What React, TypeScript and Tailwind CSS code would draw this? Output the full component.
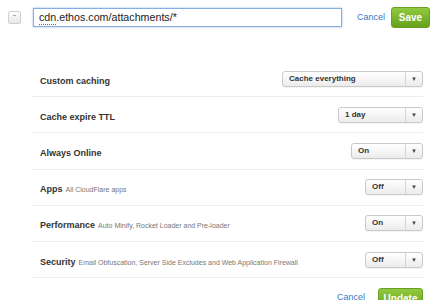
import React from "react";

type Row = {
  title: string;
  desc?: string;
  value: string;
  width: string;
};

const rows: Row[] = [
  { title: "Custom caching", value: "Cache everything", width: "w-[141px]" },
  { title: "Cache expire TTL", value: "1 day", width: "w-[85px]" },
  { title: "Always Online", value: "On", width: "w-[72px]" },
  { title: "Apps", desc: "All CloudFlare apps", value: "Off", width: "w-[58px]" },
  {
    title: "Performance",
    desc: "Auto Minify, Rocket Loader and Pre-loader",
    value: "On",
    width: "w-[58px]",
  },
  {
    title: "Security",
    desc: "Email Obfuscation, Server Side Excludes and Web Application Firewall",
    value: "Off",
    width: "w-[58px]",
  },
];

function Select({ value, width }: { value: string; width: string }) {
  return (
    <div
      className={`${width} h-[16px] flex items-stretch rounded-[3px] border border-[#c9c9c9] bg-gradient-to-b from-white to-[#ececec] shadow-[0_1px_0_rgba(0,0,0,0.04)]`}
    >
      <div className="flex-1 flex items-center pl-[6px] text-[8px] font-bold text-[#333] leading-none">
        {value}
      </div>
      <div className="w-[17px] border-l border-[#d4d4d4] flex items-center justify-center text-[6px] text-[#444] leading-none">
        ▼
      </div>
    </div>
  );
}

export default function App() {
  return (
    <div
      className="w-[435px] h-[300px] bg-white overflow-hidden"
      style={{ fontFamily: '"Liberation Sans", Arial, sans-serif' }}
    >
      {/* Top bar */}
      <div className="flex items-center pl-[8px] pt-[7px]">
        <div className="w-[13px] h-[13px] rounded-[2px] border border-[#cfcfcf] bg-gradient-to-b from-white to-[#e6e6e6] flex justify-center pt-[3px]">
          <div className="w-[3px] h-[1px] bg-[#aaa]" />
        </div>
        <div className="ml-[12px] w-[309px] h-[19px] border border-[#86aede] shadow-[0_0_2px_rgba(80,140,220,0.6)] flex items-center pl-[5px] text-[10.7px] text-[#222]">
          <span className="underline decoration-dotted decoration-[#e03a3a] underline-offset-2">
            cdn
          </span>
          .ethos.com/attachments/*
        </div>
        <span className="ml-[15px] text-[9px] text-[#3a78c3]">Cancel</span>
        <div className="ml-[6px] w-[39px] h-[21px] rounded-[3px] bg-gradient-to-b from-[#8fca3f] to-[#67a11a] border border-[#6a9f22] flex items-center justify-center text-[10px] font-bold text-white">
          Save
        </div>
      </div>

      {/* Settings rows */}
      <div className="ml-[32px] w-[391px] mt-[33px]">
        {rows.map((r) => (
          <div
            key={r.title}
            className="h-[36.2px] border-b border-[#ececec] flex items-center justify-between pl-[8px]"
          >
            <div className="whitespace-nowrap leading-none">
              <span className="text-[9px] font-bold text-[#333]">{r.title}</span>
              {r.desc && (
                <span className="ml-[3px] text-[7px] text-[#777]">{r.desc}</span>
              )}
            </div>
            <Select value={r.value} width={r.width} />
          </div>
        ))}
      </div>

      {/* Bottom actions */}
      <div className="ml-[32px] w-[391px] flex justify-end items-start mt-[10px]">
        <span className="mt-[3px] text-[9px] text-[#3a78c3]">Cancel</span>
        <div className="ml-[13px] w-[45px] h-[21px] rounded-[3px] bg-gradient-to-b from-[#8fca3f] to-[#67a11a] border border-[#6a9f22] flex items-center justify-center text-[10px] font-bold text-white">
          Update
        </div>
      </div>
    </div>
  );
}
